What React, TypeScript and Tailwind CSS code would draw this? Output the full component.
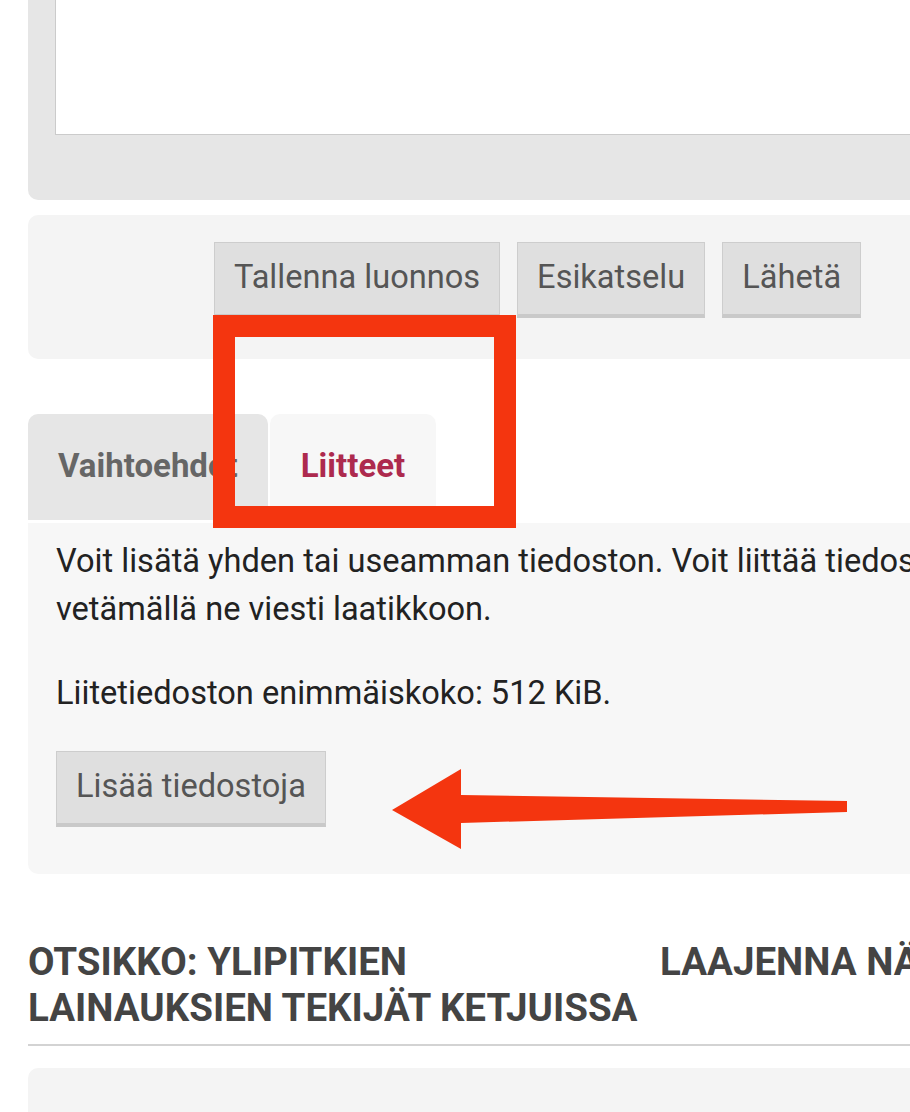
import React from "react";

function Btn({ children }: { children: React.ReactNode }) {
  return (
    <div className="shrink-0 bg-[#dfdfdf] border border-[#cdcdcd] border-b-4 border-b-[#c9c9c9] px-[19px] pt-[10px] pb-[13px] text-[32.6px] leading-[48px] text-[#555555] whitespace-nowrap">
      {children}
    </div>
  );
}

export default function App() {
  return (
    <div className="relative w-[910px] h-[1112px] overflow-hidden bg-white font-['Roboto',sans-serif]">
      {/* editor panel */}
      <div className="ml-[28px] w-[1000px] h-[200px] bg-[#e6e6e6] rounded-b-[10px] pl-[27px]">
        <div className="h-[135px] bg-white border-l border-b border-[#cbcbcb]" />
      </div>

      {/* action buttons */}
      <div className="mt-[15px] ml-[28px] w-[1000px] bg-[#f4f4f4] rounded-[10px] pt-[27px] pb-[41px] pl-[186px] flex gap-[17px]">
        <Btn>Tallenna luonnos</Btn>
        <Btn>Esikatselu</Btn>
        <Btn>Lähetä</Btn>
      </div>

      {/* tabs */}
      <div className="mt-[55px] ml-[28px] flex gap-[2px]">
        <div className="bg-[#e6e6e6] rounded-t-[10px] px-[30px] pt-[28px] pb-[30px] text-[33px] leading-[48px] font-bold text-[#666666]">
          Vaihtoehdot
        </div>
        <div className="bg-[#f7f7f7] rounded-t-[10px] px-[31px] pt-[28px] pb-[30px] text-[33px] leading-[48px] font-bold text-[#ad2a4e]">
          Liitteet
        </div>
      </div>

      {/* attachments panel */}
      <div className="mt-[3px] ml-[28px] w-[1000px] bg-[#f7f7f7] rounded-b-[10px] rounded-tr-[10px] pl-[28px] pt-[14px] pb-[47px] text-[32.6px] leading-[48px] text-[#222222]">
        <p className="mb-[36px] whitespace-nowrap">
          Voit lisätä yhden tai useamman tiedoston. Voit liittää tiedostoja myös
          <br />
          vetämällä ne viesti laatikkoon.
        </p>
        <p className="whitespace-nowrap">Liitetiedoston enimmäiskoko: 512 KiB.</p>
        <div className="mt-[34px] flex">
          <Btn>Lisää tiedostoja</Btn>
        </div>
      </div>

      {/* heading */}
      <div className="mt-[65px] ml-[28px] flex text-[38.5px] leading-[46px] font-bold uppercase text-[#444444] whitespace-nowrap">
        <div className="w-[632px] shrink-0">
          Otsikko: Ylipitkien
          <br />
          lainauksien tekijät ketjuissa
        </div>
        <div className="shrink-0">Laajenna näkymä</div>
      </div>
      <div className="mt-[13px] ml-[28px] w-[1000px] h-[2px] bg-[#d3d3d3]" />
      <div className="mt-[22px] ml-[28px] w-[1000px] h-[120px] bg-[#f4f4f4] rounded-t-[10px]" />

      {/* annotations */}
      <div className="absolute left-[213px] top-[315px] w-[303px] h-[213px] border-[22px] border-[#f4350f]" />
      <svg
        className="absolute left-[380px] top-[760px]"
        width="480"
        height="100"
        viewBox="380 760 480 100"
      >
        <polygon
          points="392,810 461,769 461,795 847,801 847,812 461,823 461,849"
          fill="#f4350f"
        />
      </svg>
    </div>
  );
}
